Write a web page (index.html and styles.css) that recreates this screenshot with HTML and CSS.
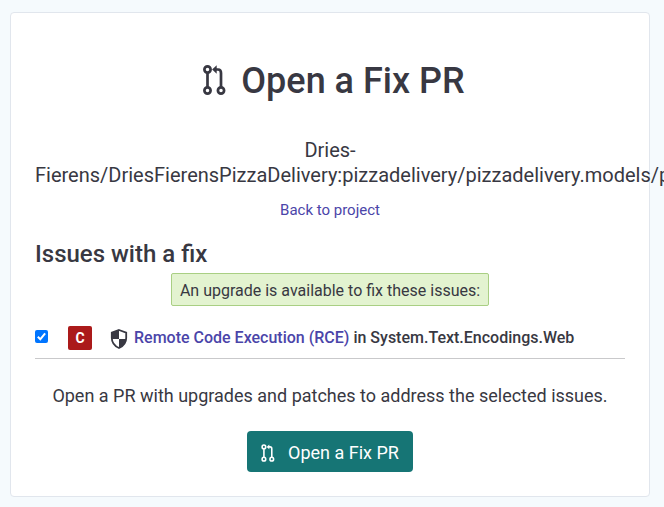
FILE: index.html
```html
<!DOCTYPE html>
<html lang="en">
<head>
<meta charset="utf-8">
<title>Open a Fix PR</title>
<link rel="stylesheet" href="styles.css">
</head>
<body>
<svg class="sprite" aria-hidden="true">
  <symbol id="pull-request" viewBox="0 0 24 30">
    <g fill="none" stroke="currentColor" stroke-width="2.7">
      <circle cx="5" cy="4.5" r="3.1"/>
      <circle cx="5" cy="25.5" r="3.1"/>
      <circle cx="18.5" cy="25.5" r="3.1"/>
      <path d="M5 7.5v15M12 4.5h3.500q3 0 3 3.500v14.500"/>
    </g>
    <path d="M9.600 4.500l4.600-4.200v8.400z" fill="currentColor"/>
  </symbol>
</svg>
<main class="card">
  <h1 class="title"><svg class="title-icon"><use href="#pull-request"/></svg><span>Open a Fix PR</span></h1>
  <p class="project">Dries-<br>Fierens/DriesFierensPizzaDelivery:pizzadelivery/pizzadelivery.models/p</p>
  <a class="back" href="#">Back to project</a>
  <h2 class="subtitle">Issues with a fix</h2>
  <p class="notice">An upgrade is available to fix these issues:</p>
  <div class="issue">
    <span class="check"><svg viewBox="0 0 13 13"><path d="M2.800 6.800l2.500 2.500 4.800-6" fill="none" stroke="#fff" stroke-width="2"/></svg></span>
    <span class="severity">C</span>
    <svg class="shield" viewBox="0 0 18 20">
      <path d="M9 1l7.200 2.700v5.200c0 4.600-2.800 8-7.200 10.100-4.400-2.100-7.200-5.500-7.200-10.100V3.700z" fill="#fff" stroke="currentColor" stroke-width="1.800"/>
      <path d="M9 10V1L1.800 3.700V10zM9 10v9c4.200-2 6.700-5 7.200-9z" fill="currentColor"/>
    </svg>
    <span class="issue-name"><a href="#">Remote Code Execution (RCE)</a> in System.Text.Encodings.Web</span>
  </div>
  <p class="summary">Open a PR with upgrades and patches to address the selected issues.</p>
  <button class="submit"><svg class="submit-icon"><use href="#pull-request"/></svg><span>Open a Fix PR</span></button>
</main>
</body>
</html>
```
FILE: styles.css
```css
* { box-sizing: border-box; }
html { overflow: hidden; }
body {
  margin: 0;
  padding: 12px 10px 0;
  height: 507px;
  overflow: hidden;
  background: #f5fafd;
  color: #383842;
  font-family: Roboto, sans-serif;
}
.sprite { display: none; }
.card {
  display: flex;
  flex-direction: column;
  align-items: center;
  width: 640px;
  height: 485px;
  padding: 0 24px;
  background: #fff;
  border: 1px solid #e1e6ed;
  border-radius: 4px;
}
h1, h2, p { margin: 0; }
a { color: #4b45a9; text-decoration: none; }
.title {
  display: flex;
  align-items: center;
  gap: 14px;
  margin-top: 46px;
  padding-left: 7px;
  font-size: 36px;
  font-weight: 500;
  line-height: 44px;
}
.title-icon { width: 25px; height: 30px; margin-top: -3px; }
.project {
  width: 100%;
  margin-top: 35px;
  font-size: 20px;
  line-height: 25px;
  text-align: center;
  white-space: nowrap;
}
.back { margin-top: 12px; font-size: 15px; line-height: 20px; }
.subtitle {
  align-self: flex-start;
  margin-top: 19px;
  font-size: 24px;
  font-weight: 500;
  line-height: 30px;
}
.notice {
  height: 33px;
  margin-top: 4px;
  padding: 0 8px;
  background: #e3f3d0;
  border: 1px solid #a9cf83;
  border-radius: 2px;
  font-size: 16px;
  line-height: 33px;
}
.issue {
  display: flex;
  align-items: center;
  width: 100%;
  height: 53px;
  padding-bottom: 2px;
  padding-top: 13px;
  border-bottom: 1px solid #c9c9cb;
}
.check {
  width: 13px;
  height: 13px;
  margin-top: -3px;
  background: #0075ff;
  border-radius: 2px;
}
.check svg { display: block; }
.severity {
  width: 24px;
  height: 24px;
  margin-left: 20px;
  background: #ab1a1a;
  border-radius: 2px;
  color: #fff;
  font-size: 14px;
  font-weight: 700;
  line-height: 25px;
  text-align: center;
}
.shield { width: 18px; height: 20px; margin: 2px 6px 0 18px; }
.issue-name { font-size: 16px; font-weight: 500; line-height: 20px; white-space: nowrap; }
.summary { margin-top: 25px; font-size: 18px; line-height: 24px; white-space: nowrap; }
.submit {
  display: flex;
  align-items: center;
  gap: 13px;
  width: 166px;
  height: 41px;
  margin-top: 23px;
  padding: 2px 0 0 14px;
  background: #167575;
  border: 0;
  border-radius: 4px;
  color: #fff;
  font: 400 18px/24px Roboto, sans-serif;
  white-space: nowrap;
}
.submit-icon { width: 14px; height: 18px; margin-top: 1px; }
```
